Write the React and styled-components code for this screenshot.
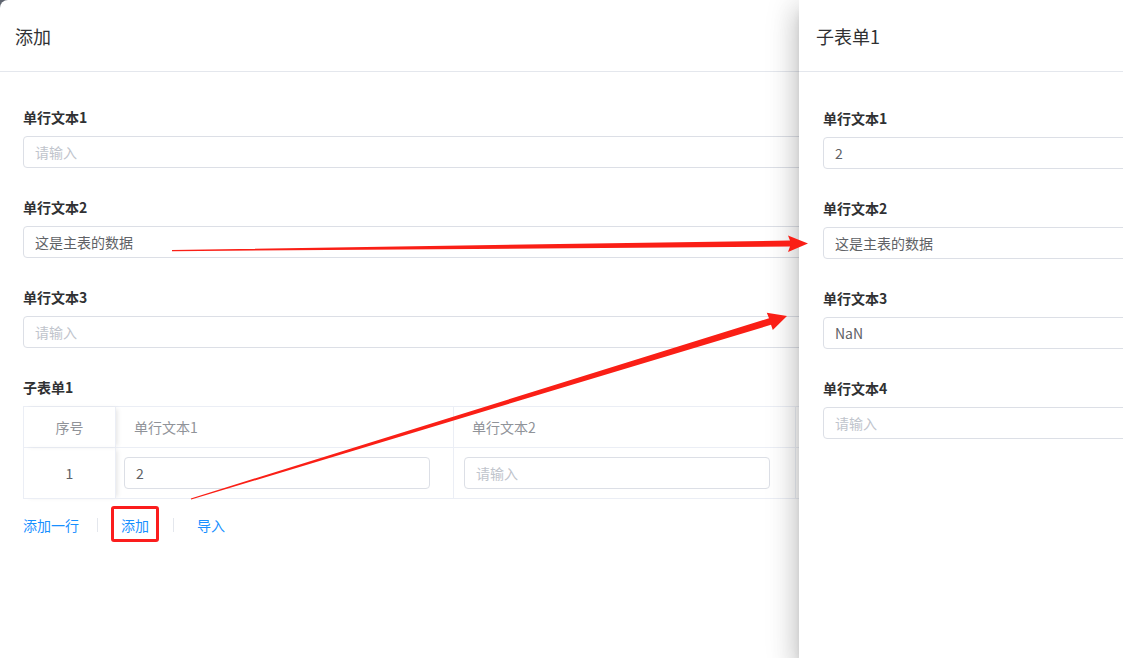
import React from 'react';
import styled, { createGlobalStyle } from 'styled-components';

const GlobalStyle = createGlobalStyle`
  html, body {
    margin: 0;
    padding: 0;
    background: #5f6570;
  }
  body {
    font-family: 'Noto Sans CJK SC', 'Noto Sans', 'Liberation Sans', sans-serif;
    font-size: 14px;
    color: #303133;
  }
`;

// page frame
const Screen = styled.div`
  position: relative;
  width: 1123px;
  height: 658px;
  overflow: hidden;
`;

const MainDrawer = styled.section`
  width: 100%;
  height: 100%;
  background: #fff;
  border-top-left-radius: 8px;
  display: flex;
  flex-direction: column;
`;

const SideDrawer = styled.section`
  position: absolute;
  top: 0;
  left: 799px;
  width: 324px;
  height: 100%;
  background: #fff;
  display: flex;
  flex-direction: column;
  box-shadow: 0 8px 10px -5px rgba(0, 0, 0, 0.2),
    0 16px 24px 2px rgba(0, 0, 0, 0.14), 0 6px 30px 5px rgba(0, 0, 0, 0.12);
  overflow: hidden;
`;

const DrawerHeader = styled.header`
  height: 71px;
  flex: none;
  display: flex;
  align-items: center;
  padding-left: ${(p) => p.$indent}px;
  border-bottom: 1px solid #e4e7ed;
  font-size: 18px;
  color: #303133;
`;

const DrawerBody = styled.div`
  padding: ${(p) => p.$top}px 0 0 ${(p) => p.$left}px;
  display: flex;
  flex-direction: column;
  width: ${(p) => (p.$width ? `${p.$width}px` : 'auto')};
  flex: none;
`;

// form parts
const FormItem = styled.div`
  display: flex;
  flex-direction: column;
  margin-bottom: 28px;
`;

const Label = styled.label`
  height: 22px;
  line-height: 22px;
  margin-bottom: 8px;
  font-size: 14px;
  font-weight: 700;
  color: #303133;
`;

const Input = styled.div`
  box-sizing: border-box;
  height: ${(p) => p.$h || 32}px;
  width: ${(p) => (p.$w ? `${p.$w}px` : '100%')};
  border: 1px solid #dcdfe6;
  border-radius: 4px;
  padding: 0 11px;
  display: flex;
  align-items: center;
  font-size: 14px;
  color: ${(p) => (p.$empty ? '#c0c4cc' : '#606266')};
  background: #fff;
  white-space: nowrap;
`;

// sub table
const Table = styled.div`
  display: grid;
  grid-template-columns: 92px 338px 342px 340px;
  border-top: 1px solid #ebeef5;
  border-left: 1px solid #ebeef5;
  width: max-content;
`;

const HeadCell = styled.div`
  height: 40px;
  display: flex;
  align-items: center;
  justify-content: ${(p) => (p.$center ? 'center' : 'flex-start')};
  padding-left: ${(p) => (p.$center ? 0 : 18)}px;
  border-right: 1px solid #ebeef5;
  border-bottom: 1px solid #ebeef5;
  color: #909399;
  font-size: 14px;
  ${(p) => p.$fixed && 'box-shadow: 3px 0 5px -2px rgba(0,0,0,0.12);'}
`;

const BodyCell = styled.div`
  height: 50px;
  display: flex;
  align-items: center;
  justify-content: ${(p) => (p.$center ? 'center' : 'flex-start')};
  padding-left: ${(p) => (p.$center ? 0 : p.$pad || 10)}px;
  border-right: 1px solid #ebeef5;
  border-bottom: 1px solid #ebeef5;
  color: #606266;
  font-size: 14px;
  ${(p) => p.$fixed && 'box-shadow: 3px 0 5px -2px rgba(0,0,0,0.12);'}
`;

const ActionRow = styled.div`
  display: flex;
  align-items: center;
  height: 30px;
  margin-top: 11px;
`;

const LinkButton = styled.span`
  position: relative;
  color: #1890ff;
  font-size: 14px;
  line-height: 20px;
  ${(p) =>
    p.$marked &&
    `
    &::after {
      content: '';
      position: absolute;
      left: -10px;
      right: -10px;
      top: -9px;
      bottom: -7px;
      border: 3px solid #fb1d1d;
      border-radius: 3px;
    }
  `}
`;

const Divider = styled.span`
  width: 1px;
  height: 14px;
  background: #e4e7ed;
  margin: 0 23px 0 ${(p) => (p.$first ? 18 : 24)}px;
`;

const Annotation = styled.svg`
  position: absolute;
  inset: 0;
  pointer-events: none;
`;

const mainFields = [
  { label: '单行文本1', value: '' },
  { label: '单行文本2', value: '这是主表的数据' },
  { label: '单行文本3', value: '' },
];

const sideFields = [
  { label: '单行文本1', value: '2' },
  { label: '单行文本2', value: '这是主表的数据' },
  { label: '单行文本3', value: 'NaN' },
  { label: '单行文本4', value: '' },
];

const Field = ({ label, value }) => (
  <FormItem>
    <Label>{label}</Label>
    <Input $empty={!value}>{value || '请输入'}</Input>
  </FormItem>
);

const App = () => (
  <Screen>
    <GlobalStyle />
    <MainDrawer>
      <DrawerHeader $indent={15}>添加</DrawerHeader>
      <DrawerBody $top={34} $left={23}>
        {mainFields.map((f) => (
          <Field key={f.label} {...f} />
        ))}
        <Label>子表单1</Label>
        <Table>
          <HeadCell $center $fixed>序号</HeadCell>
          <HeadCell>单行文本1</HeadCell>
          <HeadCell>单行文本2</HeadCell>
          <HeadCell />
          <BodyCell $center $fixed>1</BodyCell>
          <BodyCell $pad={8}>
            <Input $w={306}>2</Input>
          </BodyCell>
          <BodyCell $pad={10}>
            <Input $w={306} $empty>请输入</Input>
          </BodyCell>
          <BodyCell $pad={10} />
        </Table>
        <ActionRow>
          <LinkButton>添加一行</LinkButton>
          <Divider $first />
          <LinkButton $marked>添加</LinkButton>
          <Divider />
          <LinkButton>导入</LinkButton>
        </ActionRow>
      </DrawerBody>
    </MainDrawer>

    <SideDrawer>
      <DrawerHeader $indent={17}>子表单1</DrawerHeader>
      <DrawerBody $top={35} $left={24} $width={460}>
        {sideFields.map((f) => (
          <Field key={f.label} {...f} />
        ))}
      </DrawerBody>
    </SideDrawer>

    <Annotation width="1123" height="658" viewBox="0 0 1123 658">
      <polygon
        fill="#fa1f16"
        points="172,250 790,240.5 788,235.5 808,243.5 788,252 790,246.5 172,251.2"
      />
      <polygon
        fill="#fa1f16"
        points="191.2,499.6 771,324.8 772.8,330 787,316 766.8,312.8 769,318.2 190.8,498.4"
      />
    </Annotation>
  </Screen>
);

export default App;
